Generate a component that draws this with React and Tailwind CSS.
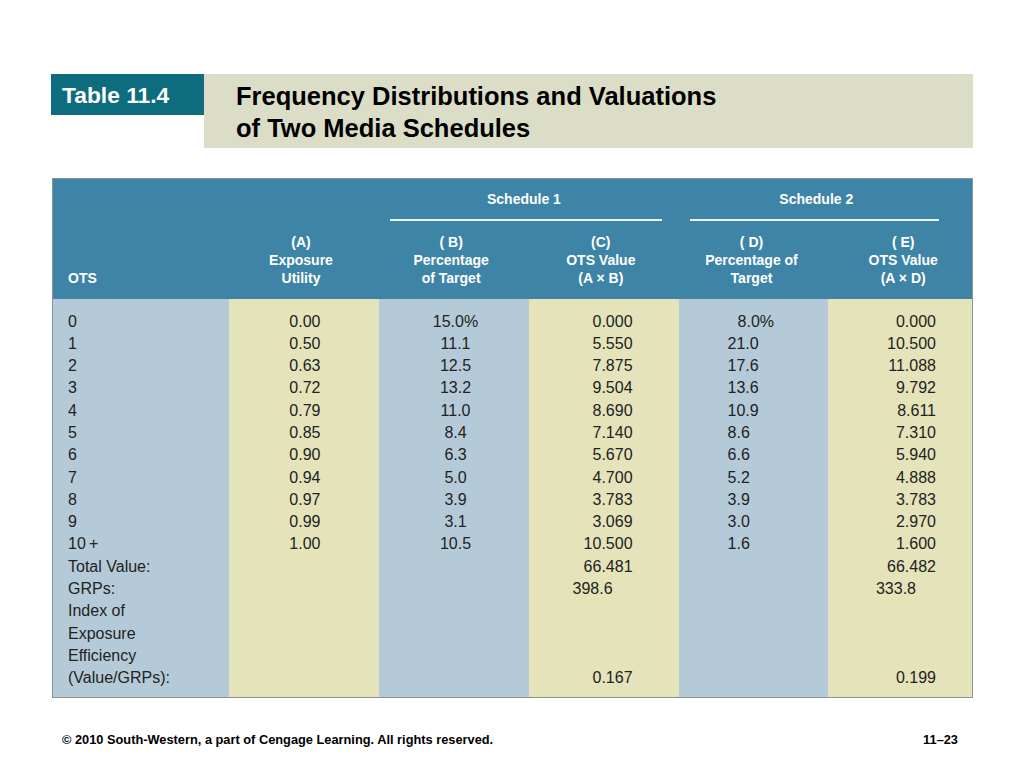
import React from 'react';

const cols = [
  { key: 'ots', w: 'w-[176px]', bg: 'bg-[#b5cad8]' },
  { key: 'a', w: 'w-[151px]', bg: 'bg-[#e4e3ba]' },
  { key: 'b', w: 'w-[150px]', bg: 'bg-[#b5cad8]' },
  { key: 'c', w: 'w-[150px]', bg: 'bg-[#e4e3ba]' },
  { key: 'd', w: 'w-[150px]', bg: 'bg-[#b5cad8]' },
  { key: 'e', w: 'w-[144px]', bg: 'bg-[#e4e3ba]' },
];

// Each body column holds its own list of 17 lines
const otsLabels = ['0', '1', '2', '3', '4', '5', '6', '7', '8', '9', '10\u2009+', 'Total Value:', 'GRPs:', 'Index of', 'Exposure', 'Efficiency', '(Value/GRPs):'];
const colA = ['0.00', '0.50', '0.63', '0.72', '0.79', '0.85', '0.90', '0.94', '0.97', '0.99', '1.00', '', '', '', '', '', ''];
const colB = ['15.0%', '11.1', '12.5', '13.2', '11.0', '8.4', '6.3', '5.0', '3.9', '3.1', '10.5', '', '', '', '', '', ''];
const colC = ['0.000', '5.550', '7.875', '9.504', '8.690', '7.140', '5.670', '4.700', '3.783', '3.069', '10.500', '66.481', '398.6', '', '', '', '0.167'];
const colD = ['8.0%', '21.0', '17.6', '13.6', '10.9', '8.6', '6.6', '5.2', '3.9', '3.0', '1.6', '', '', '', '', '', ''];
const colE = ['0.000', '10.500', '11.088', '9.792', '8.611', '7.310', '5.940', '4.888', '3.783', '2.970', '1.600', '66.482', '333.8', '', '', '', '0.199'];

const Line = ({ children, className = '' }) => (
  <div className={`h-[22.3px] leading-[22.3px] whitespace-nowrap ${className}`}>{children || '\u00a0'}</div>
);

const App = () => {
  return (
    <div className="w-[1024px] h-[768px] bg-white relative font-['Liberation_Sans',Arial,sans-serif] text-[#222]">
      <div className="pt-[74px] pl-[51px] flex">
        {/* Table number tab */}
        <div className="w-[153px] h-[41px] bg-[#0d6c7d] text-white font-bold text-[22.8px] leading-[42px] pl-[11px]">
          Table 11.4
        </div>
        {/* Title box */}
        <div className="w-[769px] h-[74px] bg-[#dcddc7] pl-[32px] pt-[7px] text-black font-bold text-[25.5px] leading-[31.5px]">
          Frequency Distributions and Valuations
          <br />
          of Two Media Schedules
        </div>
      </div>

      {/* Main table */}
      <div className="mt-[30px] ml-[52px] w-[921px] border border-[#8c9196]">
        <div className="bg-[#3e84a7] text-white font-bold text-[14px] leading-[18px] pt-[11px] pb-[12px]">
          <div className="flex">
            <div className="w-[327px]" />
            <div className="w-[300px] pl-[11px] pr-[17px]">
              <div className="text-center pr-[4px]">Schedule 1</div>
              <div className="mt-[11px] h-[1.5px] bg-white/90" />
            </div>
            <div className="w-[294px] pl-[11px] pr-[33px]">
              <div className="text-center pl-[4px]">Schedule 2</div>
              <div className="mt-[11px] h-[1.5px] bg-white/90" />
            </div>
          </div>
          <div className="flex items-end mt-[12px] text-center">
            <div className="w-[176px] text-left pl-[15px]">OTS</div>
            <div className="w-[151px] pr-[6px]">(A)<br />Exposure<br />Utility</div>
            <div className="w-[150px] pr-[6px]">( B)<br />Percentage<br />of Target</div>
            <div className="w-[150px] pr-[6px]">(C)<br />OTS Value<br />(A &times; B)</div>
            <div className="w-[150px] pr-[4px]">( D)<br />Percentage of<br />Target</div>
            <div className="w-[144px] pl-[6px]">( E)<br />OTS Value<br />(A &times; D)</div>
          </div>
        </div>

        <div className="flex text-[16px]">
          <div className={`${cols[0].w} ${cols[0].bg} pl-[15px] pt-[12px] pb-[7px]`}>
            {otsLabels.map((t, i) => <Line key={i}>{t}</Line>)}
          </div>
          <div className={`${cols[1].w} ${cols[1].bg} text-center pl-[2px] pt-[12px]`}>
            {colA.map((t, i) => <Line key={i}>{t}</Line>)}
          </div>
          <div className={`${cols[2].w} ${cols[2].bg} text-center pl-[3px] pt-[12px]`}>
            {colB.map((t, i) => <Line key={i}>{t}</Line>)}
          </div>
          <div className={`${cols[3].w} ${cols[3].bg} text-right pr-[46px] pt-[12px]`}>
            {colC.map((t, i) => <Line key={i} className={t === '398.6' ? 'pr-[20px]' : ''}>{t}</Line>)}
          </div>
          <div className={`${cols[4].w} ${cols[4].bg} pl-[49px] pt-[12px]`}>
            {colD.map((t, i) => <Line key={i} className={t === '8.0%' ? 'pl-[10px]' : ''}>{t}</Line>)}
          </div>
          <div className={`${cols[5].w} ${cols[5].bg} text-right pr-[36px] pt-[12px]`}>
            {colE.map((t, i) => <Line key={i} className={t === '333.8' ? 'pr-[20px]' : ''}>{t}</Line>)}
          </div>
        </div>
      </div>

      {/* Footer */}
      <div className="flex justify-between mt-[34px] pl-[62px] pr-[66px] text-black font-bold text-[12.8px] leading-[16px] font-['Liberation_Sans_Narrow','Liberation_Sans',Arial,sans-serif]">
        <span>&copy; 2010 South-Western, a part of Cengage Learning. All rights reserved.</span>
        <span>11&ndash;23</span>
      </div>
    </div>
  );
};

export default App;
